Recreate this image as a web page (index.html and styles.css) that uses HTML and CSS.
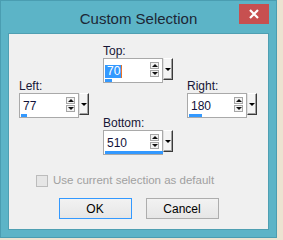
FILE: index.html
```html
<!DOCTYPE html>
<html lang="en">
<head>
    <meta charset="UTF-8">
    <title>Custom Selection</title>
    <link rel="stylesheet" href="styles.css">
</head>
<body>
    <div class="window">
        <div class="titlebar">
            <span></span>
            <div class="title">Custom Selection</div>
            <div class="close">
                <svg width="10" height="10" viewBox="0 0 10 10">
                    <path d="M1 1 L9 9 M9 1 L1 9" stroke="#fff" stroke-width="2.2" fill="none"/>
                </svg>
            </div>
        </div>
        <div class="panel">
            <div class="sides">
                <div class="col side">
                    <div class="group">
                        <div class="label">Left:</div>
                        <div class="spin">
                            <div class="field">
                                <div class="row">
                                    <div class="value">77</div>
                                    <div class="arrows"><span class="up"></span><span class="down"></span></div>
                                </div>
                                <div class="bar" style="width: 6px"></div>
                            </div>
                            <div class="drop"></div>
                        </div>
                    </div>
                </div>

                <div class="col middle">
                    <div class="group">
                        <div class="label">Top:</div>
                        <div class="spin">
                            <div class="field">
                                <div class="row">
                                    <div class="value"><span class="sel">70</span><span class="caret"></span></div>
                                    <div class="arrows"><span class="up"></span><span class="down"></span></div>
                                </div>
                                <div class="bar" style="width: 7px"></div>
                            </div>
                            <div class="drop"></div>
                        </div>
                    </div>

                    <div class="group bottom">
                        <div class="label">Bottom:</div>
                        <div class="spin">
                            <div class="field">
                                <div class="row">
                                    <div class="value">510</div>
                                    <div class="arrows"><span class="up"></span><span class="down"></span></div>
                                </div>
                                <div class="bar" style="width: 58px"></div>
                            </div>
                            <div class="drop"></div>
                        </div>
                    </div>
                </div>

                <div class="col side">
                    <div class="group">
                        <div class="label">Right:</div>
                        <div class="spin">
                            <div class="field">
                                <div class="row">
                                    <div class="value">180</div>
                                    <div class="arrows"><span class="up"></span><span class="down"></span></div>
                                </div>
                                <div class="bar" style="width: 13px"></div>
                            </div>
                            <div class="drop"></div>
                        </div>
                    </div>
                </div>
            </div>

            <div class="check">
                <span class="box"></span>
                <span>Use current selection as default</span>
            </div>

            <div class="buttons">
                <button class="btn default">OK</button>
                <button class="btn">Cancel</button>
            </div>
        </div>
    </div>
</body>
</html>
```

FILE: styles.css
```css
body {
    margin: 0;
    background-color: #ece3d1;
    font-family: "Liberation Sans", Arial, sans-serif;
}

.window {
    width: 277px;
    height: 238px;
    box-sizing: border-box;
    background: #5cb4c7;
    border: 1px solid #4a9db1;
    padding: 0 7px 7px;
}

.titlebar {
    height: 32px;
    display: grid;
    grid-template-columns: 1fr auto 1fr;
}

.title {
    margin-top: 8px;
    font-size: 15px;
    line-height: 20px;
    color: #1c2735;
}

.close {
    justify-self: end;
    margin-top: 3px;
    width: 30px;
    height: 20px;
    background: #c75050;
    display: flex;
    align-items: center;
    justify-content: center;
}

.panel {
    height: 197px;
    box-sizing: border-box;
    background: #f0f0f0;
    border: 1px solid #4f9fb2;
    padding: 11px 0 0 10px;
}

.sides {
    display: flex;
    gap: 14px;
}

.side {
    padding-top: 35px;
}

.group.bottom {
    margin-top: 34px;
}

.label {
    font-size: 12px;
    line-height: 13px;
    color: #161636;
}

.spin {
    display: flex;
    align-items: flex-start;
}

.field {
    width: 60px;
    height: 25px;
    box-sizing: border-box;
    background: #fff;
    border: 1px solid #a9a9a9;
    display: flex;
    flex-direction: column;
}

.row {
    flex: 1;
    display: flex;
    justify-content: space-between;
}

.value {
    padding: 6px 0 0 3px;
    font-size: 12px;
    line-height: 13px;
    color: #12123a;
    display: flex;
    align-items: flex-start;
}

.sel {
    background: #3399ff;
    color: #fff;
    margin-left: -2px;
    padding: 0 1px 0 2px;
}

.caret {
    width: 1px;
    height: 13px;
    background: #e8742a;
}

.arrows {
    margin: 3px 3px 0 0;
    display: flex;
    flex-direction: column;
    gap: 1px;
}

.arrows span {
    width: 9px;
    height: 7px;
    box-sizing: border-box;
    border: 1px solid #a6a6a6;
    background: #f2f2f2;
    display: flex;
    align-items: center;
    justify-content: center;
}

.arrows span::after {
    content: "";
    border-left: 3px solid transparent;
    border-right: 3px solid transparent;
}

.arrows .up::after {
    border-bottom: 3px solid #111;
}

.arrows .down::after {
    border-top: 3px solid #111;
}

.bar {
    height: 3px;
    margin-left: 1px;
    background: #3399ff;
}

.drop {
    width: 10px;
    height: 22px;
    box-sizing: border-box;
    background: #f4f4f4;
    border: 1px solid;
    border-color: #fff #3a3a3a #3a3a3a #e0e0e0;
    box-shadow: inset -1px -1px #a0a0a0;
    display: flex;
    align-items: center;
    justify-content: center;
}

.drop::after {
    content: "";
    border-left: 3px solid transparent;
    border-right: 3px solid transparent;
    border-top: 3px solid #000;
}

.check {
    margin: 19px 0 0 17px;
    display: flex;
    align-items: center;
    gap: 5px;
    font-size: 11.5px;
    line-height: 13px;
    color: #a0a0a0;
}

.check .box {
    width: 12px;
    height: 12px;
    box-sizing: border-box;
    border: 1px solid #bcbcbc;
    background: #e6e6e6;
}

.buttons {
    margin: 11px 10px 0 0;
    display: flex;
    justify-content: center;
    gap: 14px;
}

.btn {
    width: 73px;
    height: 21px;
    padding: 0;
    font-family: "Liberation Sans", Arial, sans-serif;
    font-size: 12px;
    color: #000;
    background: linear-gradient(#f2f2f2, #e6e6e6);
    border: 1px solid #adadad;
}

.btn.default {
    border-color: #3399ff;
}
```
